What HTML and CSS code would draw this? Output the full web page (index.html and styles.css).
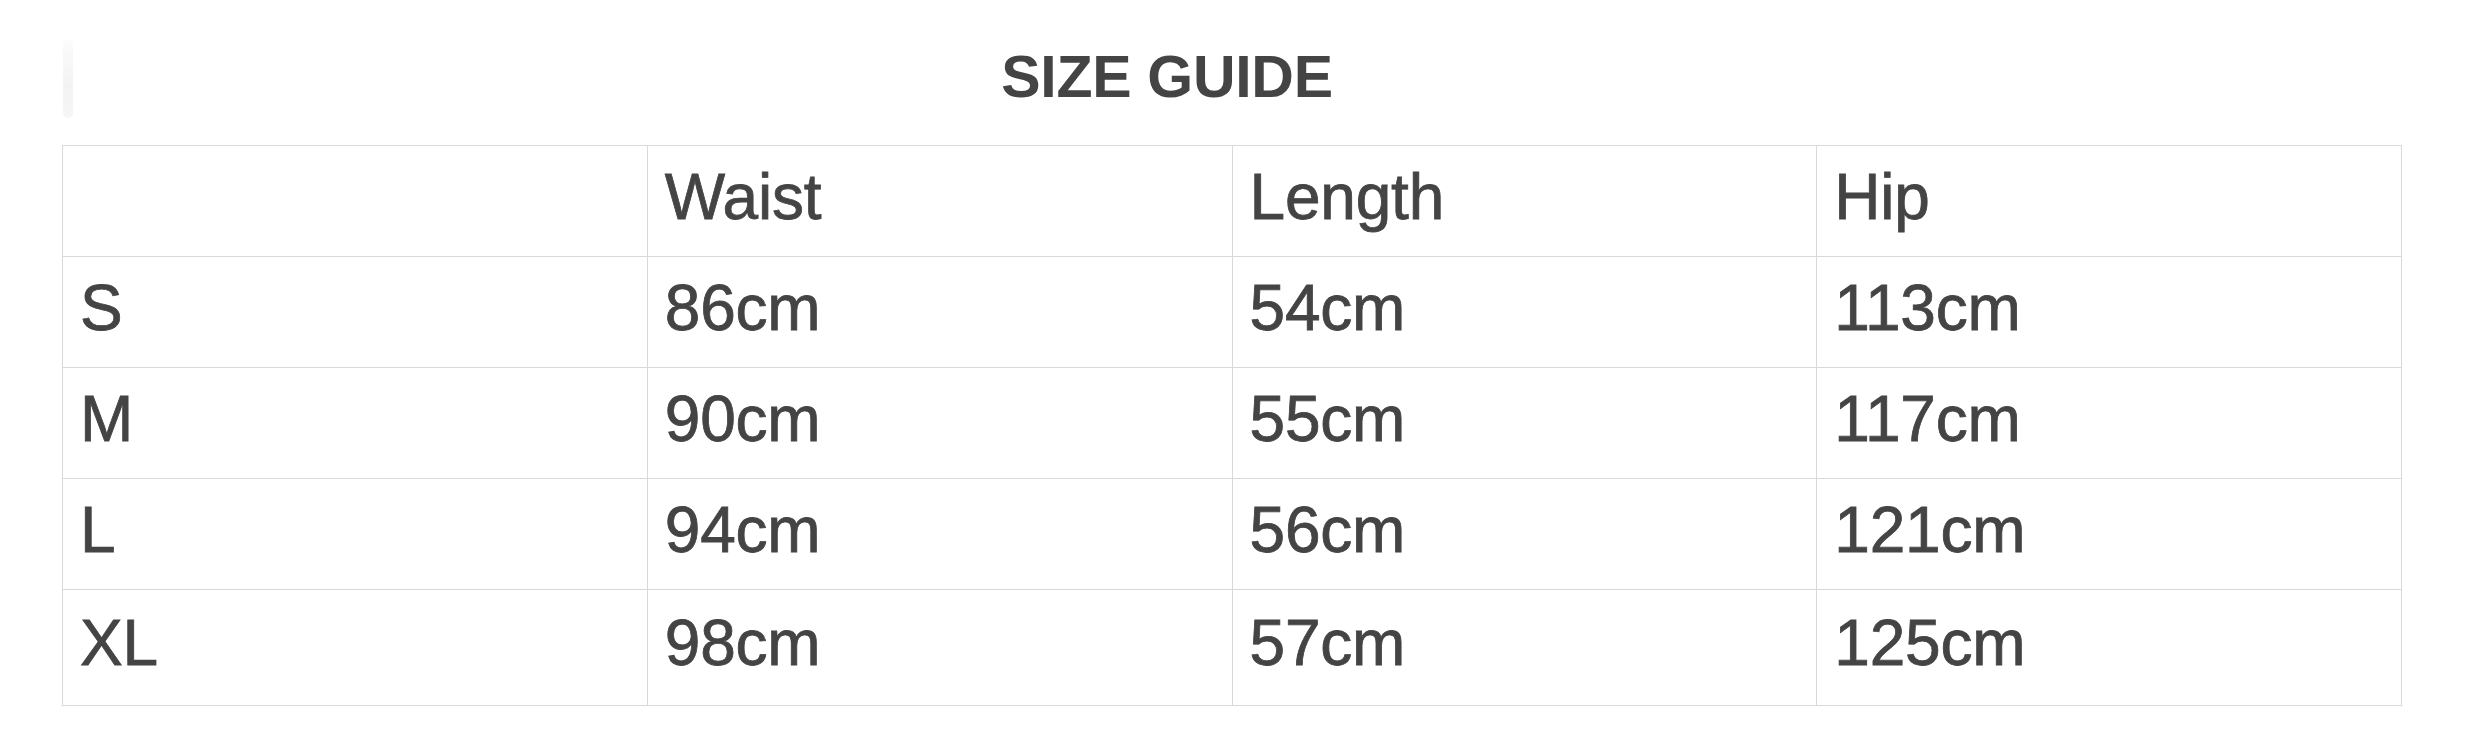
FILE: index.html
```html
<!DOCTYPE html>
<html lang="en">
<head>
<meta charset="utf-8">
<title>Size Guide</title>
<link rel="stylesheet" href="styles.css">
</head>
<body>
<div class="page">
  <div class="title-row">
    <span class="edge"></span>
    <h2 class="title">SIZE GUIDE</h2>
  </div>
  <table class="size-table">
    <colgroup><col><col><col><col></colgroup>
    <thead>
      <tr><th></th><th>Waist</th><th>Length</th><th>Hip</th></tr>
    </thead>
    <tbody>
      <tr><td>S</td><td>86cm</td><td>54cm</td><td>113cm</td></tr>
      <tr><td>M</td><td>90cm</td><td>55cm</td><td>117cm</td></tr>
      <tr><td>L</td><td>94cm</td><td>56cm</td><td>121cm</td></tr>
      <tr class="last"><td>XL</td><td>98cm</td><td>57cm</td><td>125cm</td></tr>
    </tbody>
  </table>
</div>
</body>
</html>
```
FILE: styles.css
```css
html, body {
  margin: 0;
  padding: 0;
  background: #ffffff;
}
body {
  width: 2470px;
  height: 752px;
  overflow: hidden;
  font-family: "Liberation Sans", Arial, Helvetica, sans-serif;
  color: #444444;
}
.page {
  padding-top: 40px;
}
.title-row {
  display: flex;
  align-items: flex-start;
  padding-left: 63px;
  height: 105px;
}
.edge {
  width: 10px;
  height: 78px;
  border-radius: 5px;
  background: linear-gradient(to bottom, #fbfbfb, #f3f3f3 60%, #f6f6f6);
  flex: none;
}
.title {
  flex: 1;
  margin: 8px 0 0 0;
  padding-right: 209px;
  text-align: center;
  font-size: 59px;
  line-height: 59px;
  font-weight: 700;
  color: #444444;
  letter-spacing: -0.3px;
}
.size-table {
  margin-left: 62px;
  width: 2340px;
  table-layout: fixed;
  border-collapse: collapse;
}
.size-table col {
  width: 25%;
}
.size-table th,
.size-table td {
  border: 1px solid #d9d9d9;
  padding: 19px 17px 27px 17px;
  font-size: 64px;
  line-height: 64px;
  font-weight: 400;
  letter-spacing: -0.2px;
  -webkit-text-stroke: 0.8px #444444;
  text-align: left;
  vertical-align: top;
  color: #444444;
}
.size-table tr.last td {
  padding-top: 21px;
  padding-bottom: 30px;
}
```
